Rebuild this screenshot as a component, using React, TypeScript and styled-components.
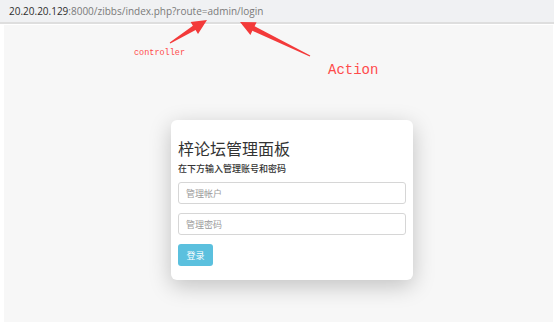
import React from "react";
import styled, { createGlobalStyle } from "styled-components";

const GlobalStyle = createGlobalStyle`
  html, body {
    margin: 0;
    padding: 0;
    background: #ffffff;
    width: 554px;
    height: 325px;
    overflow: hidden;
  }
`;

const Shot = styled.div`
  position: relative;
  width: 554px;
  height: 325px;
  display: flex;
  flex-direction: column;
  background: #ffffff;
  font-family: "Open Sans", "Noto Sans CJK SC", sans-serif;
`;

const AddressBar = styled.div`
  height: 22px;
  display: flex;
  align-items: center;
  padding-left: 9px;
  background: #f0f1f3;
  border-bottom: 2px solid #dedede;
  font-size: 10px;
`;

const Host = styled.span`
  color: #2e2e2e;
`;

const Path = styled.span`
  color: #7a7a7a;
`;

const Page = styled.div`
  flex: 1;
  margin: 1px 1px 3px 4px;
  background: #f7f7f7;
  padding: 95px 0 0 167px;
`;

const Card = styled.div`
  width: 228px;
  height: 147px;
  padding: 13px 7px 0 7px;
  background: #ffffff;
  border-radius: 6px;
  box-shadow: 0 6px 22px rgba(0, 0, 0, 0.22);
  display: flex;
  flex-direction: column;
  font-family: "Noto Sans CJK SC", sans-serif;
`;

const Title = styled.h1`
  margin: 4px 0 0 0;
  font-size: 16px;
  font-weight: 400;
  color: #333;
  line-height: 22px;
`;

const Subtitle = styled.p`
  margin: 3px 0 7px 0;
  font-size: 9px;
  font-weight: 500;
  color: #333;
  line-height: 13px;
`;

const Field = styled.div<{ $gap: number }>`
  height: 20px;
  border: 1px solid #d6d6d6;
  border-radius: 3px;
  display: flex;
  align-items: center;
  padding-left: 7px;
  font-size: 9px;
  color: #9a9a9a;
  margin-bottom: ${(p) => p.$gap}px;
`;

const Button = styled.div`
  width: 35px;
  height: 22px;
  border-radius: 3px;
  background: #5bc0de;
  color: #ffffff;
  font-size: 9px;
  display: flex;
  align-items: center;
  justify-content: center;
`;

const Note = styled.span<{ $x: number; $y: number; $size: number }>`
  position: absolute;
  left: ${(p) => p.$x}px;
  top: ${(p) => p.$y}px;
  font-family: "Liberation Mono", monospace;
  font-size: ${(p) => p.$size}px;
  color: #ff4a4a;
  line-height: 1;
`;

const Overlay = styled.svg`
  position: absolute;
  left: 0;
  top: 0;
  pointer-events: none;
`;

function Arrow({ x1, y1, x2, y2 }: { x1: number; y1: number; x2: number; y2: number }) {
  const dx = x2 - x1;
  const dy = y2 - y1;
  const len = Math.hypot(dx, dy);
  const ux = dx / len;
  const uy = dy / len;
  const nx = -uy;
  const ny = ux;
  const headLen = 15;
  const headW = 7;
  const bx = x2 - ux * headLen;
  const by = y2 - uy * headLen;
  const pts = [
    [x1 + nx * 0.6, y1 + ny * 0.6],
    [bx + nx * 2.5, by + ny * 2.5],
    [bx + nx * headW, by + ny * headW],
    [x2, y2],
    [bx - nx * headW, by - ny * headW],
    [bx - nx * 2.5, by - ny * 2.5],
    [x1 - nx * 0.6, y1 - ny * 0.6],
  ]
    .map((p) => p.map((v) => v.toFixed(1)).join(","))
    .join(" ");
  return <polygon points={pts} fill="#f33a3a" />;
}

export default function App() {
  return (
    <>
      <GlobalStyle />
      <Shot>
        <AddressBar>
          <Host>20.20.20.129</Host>
          <Path>:8000/zibbs/index.php?route=admin/login</Path>
        </AddressBar>
        <Page>
          <Card>
            <Title>梓论坛管理面板</Title>
            <Subtitle>在下方输入管理账号和密码</Subtitle>
            <Field $gap={9}>管理帐户</Field>
            <Field $gap={9}>管理密码</Field>
            <Button>登录</Button>
          </Card>
        </Page>
        <Note $x={134} $y={49} $size={8.5}>controller</Note>
        <Note $x={328} $y={63} $size={14}>Action</Note>
        <Overlay width="554" height="325">
          <Arrow x1={170} y1={43} x2={207} y2={20} />
          <Arrow x1={310} y1={56} x2={240} y2={22} />
        </Overlay>
      </Shot>
    </>
  );
}
